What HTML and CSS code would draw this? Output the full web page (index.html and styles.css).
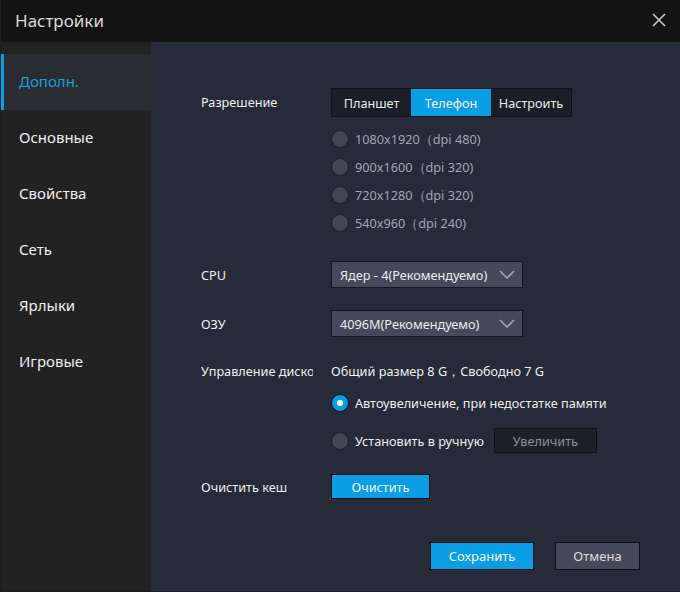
FILE: index.html
```html
<!DOCTYPE html>
<html lang="ru">
<head>
<meta charset="utf-8">
<title>Настройки</title>
<link rel="stylesheet" href="styles.css">
</head>
<body>
<div class="window">
  <header class="titlebar">
    <span class="title">Настройки</span>
    <svg class="close" width="16" height="16" viewBox="0 0 16 16"><path d="M2 2L14 14M14 2L2 14" stroke="#c8c8c8" stroke-width="1.6" fill="none"/></svg>
  </header>
  <div class="main">
    <nav class="sidebar">
      <div class="nav-item active">Дополн.</div>
      <div class="nav-item">Основные</div>
      <div class="nav-item">Свойства</div>
      <div class="nav-item">Сеть</div>
      <div class="nav-item">Ярлыки</div>
      <div class="nav-item">Игровые</div>
    </nav>
    <section class="content">
      <div class="row row-res">
        <div class="label label-up">Разрешение</div>
        <div class="segmented">
          <div class="seg">Планшет</div>
          <div class="seg seg-active">Телефон</div>
          <div class="seg">Настроить</div>
        </div>
      </div>
      <div class="radio-list">
        <div class="radio-row"><span class="radio"></span><span class="radio-text muted">1080x1920（dpi 480)</span></div>
        <div class="radio-row"><span class="radio"></span><span class="radio-text muted">900x1600（dpi 320)</span></div>
        <div class="radio-row"><span class="radio"></span><span class="radio-text muted">720x1280（dpi 320)</span></div>
        <div class="radio-row"><span class="radio"></span><span class="radio-text muted">540x960（dpi 240)</span></div>
      </div>
      <div class="row row-cpu">
        <div class="label">CPU</div>
        <div class="select"><span>Ядер - 4(Рекомендуемо)</span><svg class="chev" width="16" height="9" viewBox="0 0 16 9"><path d="M1 1L8 8L15 1" stroke="#a3a7b3" stroke-width="1.6" fill="none"/></svg></div>
      </div>
      <div class="row row-ram">
        <div class="label">ОЗУ</div>
        <div class="select"><span>4096M(Рекомендуемо)</span><svg class="chev" width="16" height="9" viewBox="0 0 16 9"><path d="M1 1L8 8L15 1" stroke="#a3a7b3" stroke-width="1.6" fill="none"/></svg></div>
      </div>
      <div class="row row-disk">
        <div class="label clip">Управление диском</div>
        <div class="disk-info">Общий размер 8 G，Свободно 7 G</div>
      </div>
      <div class="row row-auto">
        <div class="label"></div>
        <div class="radio-row"><span class="radio checked"></span><span class="radio-text">Автоувеличение, при недостатке памяти</span></div>
      </div>
      <div class="row row-manual">
        <div class="label"></div>
        <div class="radio-row"><span class="radio"></span><span class="radio-text">Установить в ручную</span></div>
        <div class="btn btn-disabled">Увеличить</div>
      </div>
      <div class="row row-cache">
        <div class="label">Очистить кеш</div>
        <div class="btn btn-blue btn-clean">Очистить</div>
      </div>
      <div class="footer">
        <div class="btn btn-blue btn-save">Сохранить</div>
        <div class="btn btn-grey btn-cancel">Отмена</div>
      </div>
    </section>
  </div>
</div>
</body>
</html>
```
FILE: styles.css
```css
* { box-sizing: border-box; }
html, body { margin: 0; padding: 0; }
body {
  width: 680px;
  height: 592px;
  background: #1a1d28;
  font-family: "Noto Sans", "Open Sans", sans-serif;
  overflow: hidden;
}
.window {
  width: 680px;
  height: 592px;
  display: flex;
  flex-direction: column;
  border-left: 1px solid #1a1d28;
  border-bottom: 1px solid #1a1d28;
}
.titlebar {
  height: 42px;
  flex: none;
  background: #131313;
  display: flex;
  align-items: center;
  justify-content: space-between;
  padding: 0 13px 0 14px;
}
.title {
  color: #dcdcdc;
  font-size: 17px;
  margin-top: -2px;
}
.close { display: block; margin-top: -3px; }
.main {
  flex: 1;
  display: flex;
  min-height: 0;
}
.sidebar {
  width: 150px;
  flex: none;
  background: #222222;
  padding-top: 12px;
}
.nav-item {
  height: 56px;
  display: flex;
  align-items: center;
  padding-left: 18px;
  color: #f0f0f0;
  font-size: 15px;
  padding-bottom: 2px;
}
.nav-item.active {
  background: #292c30;
  border-left: 3px solid #0a9ee4;
  padding-left: 15px;
  color: #1a9ee2;
}
.content {
  flex: 1;
  background: #262a39;
  padding: 46px 40px 0 50px;
  display: flex;
  flex-direction: column;
  font-size: 12.7px;
  color: #ececec;
}
.row {
  display: flex;
  align-items: center;
}
.label {
  width: 130px;
  flex: none;
  color: #f0f0f0;
  white-space: nowrap;
}
.label-up { margin-top: -2px; }
.clip { overflow: hidden; width: 112px; margin-right: 18px; }
.row-res { height: 29px; }
.segmented {
  display: flex;
  border: 1px solid #101217;
  background: #1b1e28;
  height: 29px;
}
.seg {
  width: 80px;
  display: flex;
  align-items: center;
  justify-content: center;
  color: #ececec;
}
.seg:first-child { width: 79px; }
.seg-active { background: #0a9ee4; color: #f4f4f4; }
.radio-list {
  margin-top: 8px;
  padding-left: 130px;
}
.radio-row {
  display: flex;
  align-items: center;
  height: 28px;
}
.radio {
  width: 18px;
  height: 18px;
  border-radius: 50%;
  background: #434652;
  border: 1px solid #1b1d26;
  flex: none;
  position: relative;
}
.radio.checked {
  background: #0a9ee4;
  border: 1.5px solid #14161d;
}
.radio.checked::after {
  content: "";
  position: absolute;
  left: 4.5px;
  top: 4.5px;
  width: 6px;
  height: 6px;
  border-radius: 50%;
  background: #ffffff;
}
.radio-text {
  margin-left: 6px;
  color: #f0f0f0;
  white-space: nowrap;
}
.radio-text.muted { color: #a2a6b0; }
.row-cpu { margin-top: 24px; height: 27px; }
.row-ram { margin-top: 22px; height: 27px; }
.select {
  width: 192px;
  height: 27px;
  background: #454959;
  border: 1px solid #14161d;
  display: flex;
  align-items: center;
  justify-content: space-between;
  padding: 0 7px 0 8px;
  color: #ececec;
}
.chev { display: block; }
.row-disk { margin-top: 21px; height: 26px; }
.disk-info { color: #f0f0f0; }
.row-auto { margin-top: 6px; height: 26px; }
.row-manual { margin-top: 12px; height: 25px; }
.btn {
  display: flex;
  align-items: center;
  justify-content: center;
  height: 25px;
  white-space: nowrap;
}
.btn-disabled {
  margin-left: 10px;
  width: 103px;
  background: #1d2029;
  border: 1px solid #0f1115;
  color: #8c909b;
}
.row-cache { margin-top: 21px; height: 25px; }
.btn-blue {
  background: #0a9ee4;
  border: 1px solid #0c0e12;
  color: #f4f4f4;
}
.btn-clean { width: 99px; }
.footer {
  margin-top: 43px;
  display: flex;
  justify-content: flex-end;
  gap: 21px;
}
.btn-save { width: 104px; height: 28px; font-size: 13px; }
.btn-grey {
  background: #454959;
  border: 1px solid #0c0e12;
  color: #dcdcdc;
}
.btn-cancel { width: 85px; height: 28px; font-size: 13px; }
```
